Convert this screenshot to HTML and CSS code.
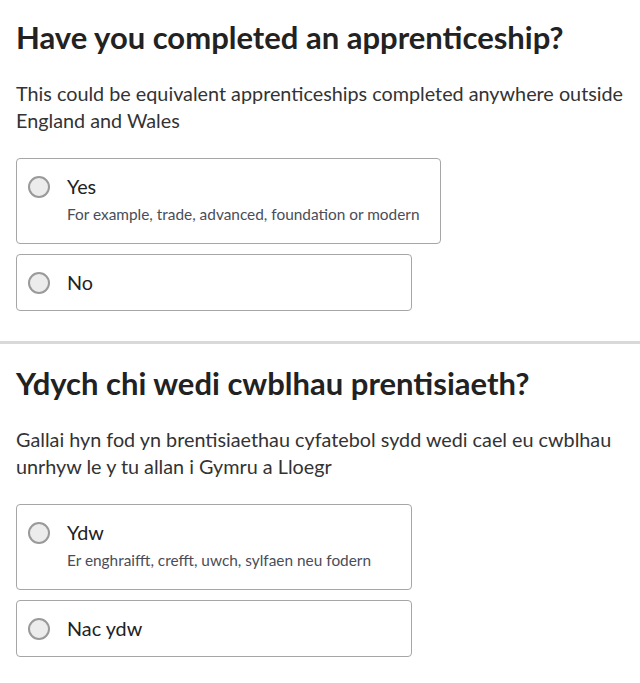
FILE: index.html
```html
<!DOCTYPE html>
<html lang="en">
<head>
    <meta charset="UTF-8">
    <meta name="viewport" content="width=device-width, initial-scale=1.0">
    <title>Apprenticeship</title>
    <link rel="stylesheet" href="styles.css">
</head>
<body>
    <main>
        <section class="question">
            <h1 class="question-title">Have you completed an apprenticeship?</h1>
            <p class="question-hint">This could be equivalent apprenticeships completed anywhere outside England and Wales</p>
            <div class="options">
                <label class="option">
                    <input type="radio" name="apprenticeship" class="option-radio">
                    <span class="option-text">
                        <span class="option-label">Yes</span>
                        <span class="option-desc">For example, trade, advanced, foundation or modern</span>
                    </span>
                </label>
                <label class="option">
                    <input type="radio" name="apprenticeship" class="option-radio">
                    <span class="option-text">
                        <span class="option-label">No</span>
                    </span>
                </label>
            </div>
        </section>

        <section class="question" lang="cy">
            <h1 class="question-title">Ydych chi wedi cwblhau prentisiaeth?</h1>
            <p class="question-hint">Gallai hyn fod yn brentisiaethau cyfatebol sydd wedi cael eu cwblhau unrhyw le y tu allan i Gymru a Lloegr</p>
            <div class="options">
                <label class="option">
                    <input type="radio" name="prentisiaeth" class="option-radio">
                    <span class="option-text">
                        <span class="option-label">Ydw</span>
                        <span class="option-desc">Er enghraifft, crefft, uwch, sylfaen neu fodern</span>
                    </span>
                </label>
                <label class="option">
                    <input type="radio" name="prentisiaeth" class="option-radio">
                    <span class="option-text">
                        <span class="option-label">Nac ydw</span>
                    </span>
                </label>
            </div>
        </section>
    </main>
</body>
</html>
```

FILE: styles.css
```css
:root {
    --text-color: #222222;
    --hint-color: #333333;
    --desc-color: #4a4d57;
    --border-color: #a6a6a6;
    --divider-color: #d9d9d9;
}

body {
    margin: 0;
    font-family: Lato, "Noto Sans", sans-serif;
    color: var(--text-color);
    background: #ffffff;
}

.question {
    padding: 20px 8px 30px 16px;
    border-bottom: 3px solid var(--divider-color);
}

.question + .question {
    padding-top: 22px;
}

.question-title {
    margin: 0 0 25px;
    font-size: 31px;
    line-height: 35px;
    font-weight: 700;
}

.question-hint {
    margin: 0 0 24px;
    font-size: 19.8px;
    line-height: 27px;
    color: var(--hint-color);
}

.options {
    display: flex;
    flex-direction: column;
    align-items: flex-start;
    gap: 10px;
}

.option {
    display: flex;
    align-items: flex-start;
    gap: 17px;
    min-width: 396px;
    box-sizing: border-box;
    padding: 14px 20px 14px 11px;
    border: 1px solid var(--border-color);
    border-radius: 4px;
    cursor: pointer;
}

.option-radio {
    appearance: none;
    margin: 3px 0 0;
    width: 22px;
    height: 22px;
    box-sizing: border-box;
    border: 2px solid #9a9a9a;
    border-radius: 50%;
    background: #ececec;
    flex-shrink: 0;
}

.option-text {
    display: flex;
    flex-direction: column;
}

.option-label {
    font-size: 19.8px;
    line-height: 27px;
}

.option-desc {
    margin: 2px 0 3px;
    font-size: 15.4px;
    line-height: 24px;
    color: var(--desc-color);
}
```
